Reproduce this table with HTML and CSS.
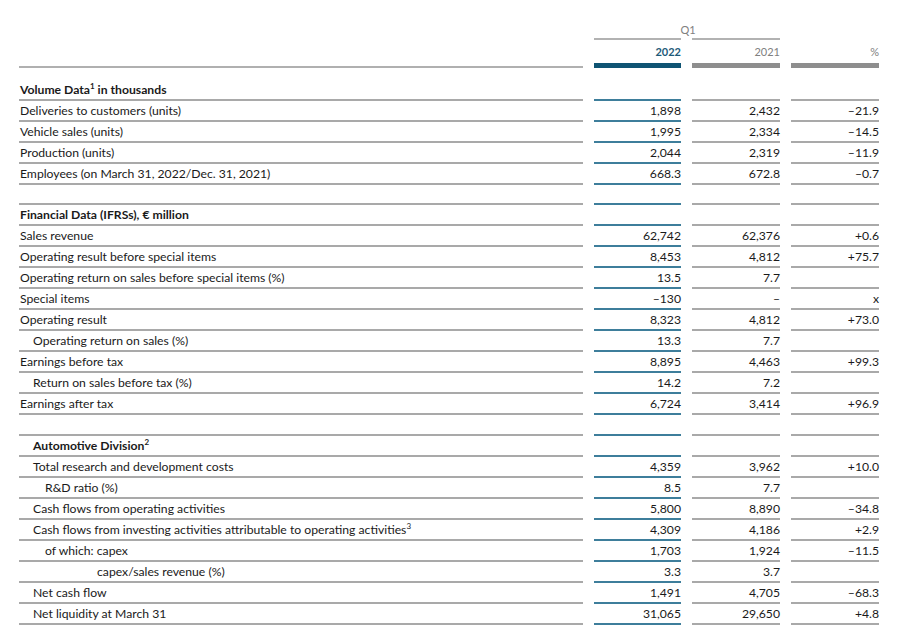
FILE: index.html
```html
<!DOCTYPE html>
<html lang="en">
<head>
<meta charset="utf-8">
<title>Key Figures Q1</title>
<link rel="stylesheet" href="styles.css">
</head>
<body>
<div class="report">
  <div class="head">
    <div class="q1">Q1</div>
    <div class="qline c2"></div>
    <div class="qline c3"></div>
    <div class="yr c2 cur">2022</div>
    <div class="yr c3">2021</div>
    <div class="yr c4">%</div>
    <div class="bar lab-rule"></div>
    <div class="bar c2 cur"></div>
    <div class="bar c3"></div>
    <div class="bar c4"></div>
  </div>

  <div class="sec first">
    <div class="row hdr"><div class="lab"><b>Volume Data<sup>1</sup> in thousands</b></div><div class="v cur"></div><div class="v"></div><div class="v"></div></div>
    <div class="row"><div class="lab">Deliveries to customers (units)</div><div class="v cur">1,898</div><div class="v">2,432</div><div class="v">–21.9</div></div>
    <div class="row"><div class="lab">Vehicle sales (units)</div><div class="v cur">1,995</div><div class="v">2,334</div><div class="v">–14.5</div></div>
    <div class="row"><div class="lab">Production (units)</div><div class="v cur">2,044</div><div class="v">2,319</div><div class="v">–11.9</div></div>
    <div class="row"><div class="lab">Employees (on March 31, 2022/Dec. 31, 2021)</div><div class="v cur">668.3</div><div class="v">672.8</div><div class="v">–0.7</div></div>
  </div>

  <div class="sec second">
    <div class="row hdr"><div class="lab"><b>Financial Data (IFRSs), € million</b></div><div class="v cur"></div><div class="v"></div><div class="v"></div></div>
    <div class="row"><div class="lab">Sales revenue</div><div class="v cur">62,742</div><div class="v">62,376</div><div class="v">+0.6</div></div>
    <div class="row"><div class="lab">Operating result before special items</div><div class="v cur">8,453</div><div class="v">4,812</div><div class="v">+75.7</div></div>
    <div class="row"><div class="lab">Operating return on sales before special items (%)</div><div class="v cur">13.5</div><div class="v">7.7</div><div class="v"></div></div>
    <div class="row"><div class="lab">Special items</div><div class="v cur">–130</div><div class="v">–</div><div class="v">x</div></div>
    <div class="row"><div class="lab">Operating result</div><div class="v cur">8,323</div><div class="v">4,812</div><div class="v">+73.0</div></div>
    <div class="row"><div class="lab i1">Operating return on sales (%)</div><div class="v cur">13.3</div><div class="v">7.7</div><div class="v"></div></div>
    <div class="row"><div class="lab">Earnings before tax</div><div class="v cur">8,895</div><div class="v">4,463</div><div class="v">+99.3</div></div>
    <div class="row"><div class="lab i1">Return on sales before tax (%)</div><div class="v cur">14.2</div><div class="v">7.2</div><div class="v"></div></div>
    <div class="row"><div class="lab">Earnings after tax</div><div class="v cur">6,724</div><div class="v">3,414</div><div class="v">+96.9</div></div>
  </div>

  <div class="sec third">
    <div class="row hdr"><div class="lab i1"><b>Automotive Division<sup>2</sup></b></div><div class="v cur"></div><div class="v"></div><div class="v"></div></div>
    <div class="row"><div class="lab i1">Total research and development costs</div><div class="v cur">4,359</div><div class="v">3,962</div><div class="v">+10.0</div></div>
    <div class="row"><div class="lab i2">R&amp;D ratio (%)</div><div class="v cur">8.5</div><div class="v">7.7</div><div class="v"></div></div>
    <div class="row"><div class="lab i1">Cash flows from operating activities</div><div class="v cur">5,800</div><div class="v">8,890</div><div class="v">–34.8</div></div>
    <div class="row"><div class="lab i1">Cash flows from investing activities attributable to operating activities<sup>3</sup></div><div class="v cur">4,309</div><div class="v">4,186</div><div class="v">+2.9</div></div>
    <div class="row"><div class="lab i2">of which: capex</div><div class="v cur">1,703</div><div class="v">1,924</div><div class="v">–11.5</div></div>
    <div class="row"><div class="lab i3">capex/sales revenue (%)</div><div class="v cur">3.3</div><div class="v">3.7</div><div class="v"></div></div>
    <div class="row"><div class="lab i1">Net cash flow</div><div class="v cur">1,491</div><div class="v">4,705</div><div class="v">–68.3</div></div>
    <div class="row"><div class="lab i1">Net liquidity at March 31</div><div class="v cur">31,065</div><div class="v">29,650</div><div class="v">+4.8</div></div>
  </div>
</div>
</body>
</html>
```

FILE: styles.css
```css
* { box-sizing: border-box; }

html, body {
  margin: 0;
  padding: 0;
  background: #ffffff;
}

body {
  font-family: Lato, "Open Sans", "Liberation Sans", sans-serif;
  font-size: 12.2px;
  color: #1a1a1a;
}

.report {
  padding-left: 19px;
  width: 905px;
}

.head,
.row {
  display: grid;
  grid-template-columns: 564px 87px 88px 88px;
  column-gap: 11px;
}

/* ---------- header ---------- */
.head {
  padding-top: 23px;
  grid-template-rows: 15px 2px 23px 5px;
}

.c2 { grid-column: 2; }
.c3 { grid-column: 3; }
.c4 { grid-column: 4; }

.q1 {
  grid-column: 2 / 4;
  grid-row: 1;
  text-align: center;
  font-size: 11px;
  line-height: 14px;
  color: #808080;
  padding-left: 2px;
}

.qline {
  grid-row: 2;
  background: #b2b2b2;
  height: 2px;
}

.yr {
  grid-row: 3;
  text-align: right;
  font-size: 11px;
  line-height: 14px;
  padding-top: 5px;
  color: #808080;
}
.yr.cur {
  color: #1d5a78;
  font-weight: 700;
}

.bar {
  grid-row: 4;
  height: 5px;
  background: #8e8e8e;
}
.bar.cur { background: #0f5473; }

.bar.lab-rule {
  grid-column: 1;
  background: none;
  border-bottom: 2px solid #b0b0b0;
}

/* ---------- sections ---------- */
.sec.first { margin-top: 12px; }
.sec.second { margin-top: 18px; }
.sec.third { margin-top: 19px; }

.row { height: 21px; }
.row > div {
  border-bottom: 2px solid #a9a9a9;
  line-height: 19px;
  white-space: nowrap;
}
.row > .v.cur { border-bottom-color: #3e7e9b; }

.sec.second .row.hdr,
.sec.third .row.hdr { height: 23px; }
.sec.second .row.hdr > div,
.sec.third .row.hdr > div { border-top: 2px solid #a9a9a9; }
.sec.second .row.hdr > .v.cur,
.sec.third .row.hdr > .v.cur { border-top-color: #3e7e9b; }

.lab { padding-left: 1px; }
.lab.i1 { padding-left: 14px; }
.lab.i2 { padding-left: 26px; }
.lab.i3 { padding-left: 78px; }

.lab b { font-weight: 700; }

.v {
  text-align: right;
  color: #1a1a1a;
}

sup {
  font-size: 8px;
  line-height: 0;
  vertical-align: 5px;
  margin-left: 0;
}
```
